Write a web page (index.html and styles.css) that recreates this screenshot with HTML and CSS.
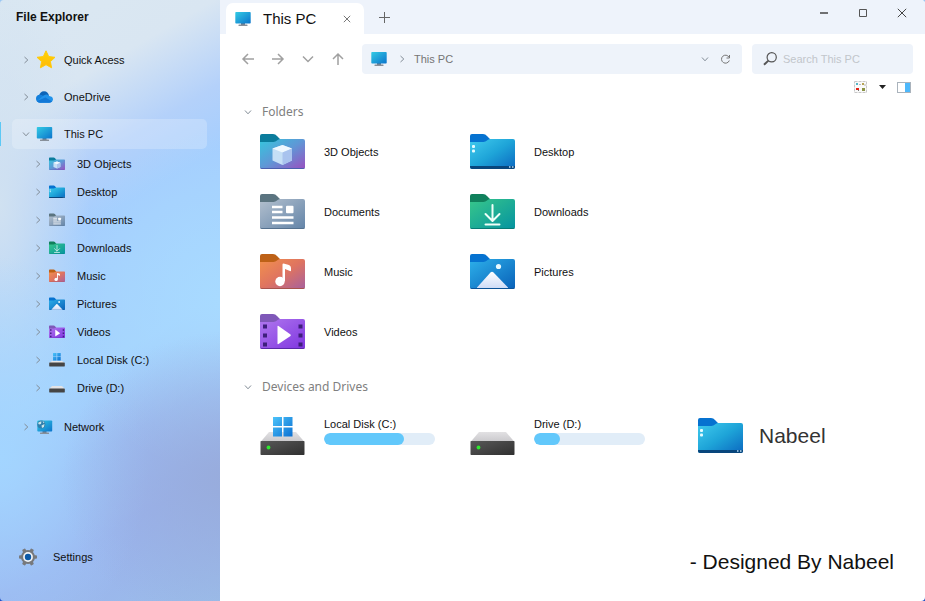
FILE: index.html
```html
<!DOCTYPE html>
<html lang="en">
<head>
<meta charset="utf-8">
<meta name="viewport" content="width=device-width, initial-scale=1">
<title>File Explorer</title>
<link rel="stylesheet" href="styles.css">
</head>
<body>
<svg class="sprite" aria-hidden="true" width="0" height="0">
  <defs>
    <linearGradient id="g3d" x1="0" y1="0" x2="1" y2="1"><stop offset="0" stop-color="#35c6dd"/><stop offset=".5" stop-color="#5f97d6"/><stop offset="1" stop-color="#9a4fc0"/></linearGradient>
    <linearGradient id="gdesk" x1="0" y1="0" x2="1" y2="1"><stop offset="0" stop-color="#41cbee"/><stop offset=".5" stop-color="#1ea4d8"/><stop offset="1" stop-color="#0b68c0"/></linearGradient>
    <linearGradient id="gdoc" x1="0" y1="0" x2="1" y2="1"><stop offset="0" stop-color="#b3c0ce"/><stop offset="1" stop-color="#6384a8"/></linearGradient>
    <linearGradient id="gdown" x1="0" y1="0" x2="1" y2="1"><stop offset="0" stop-color="#38c78a"/><stop offset="1" stop-color="#0593a0"/></linearGradient>
    <linearGradient id="gmus" x1="0" y1="0" x2="1" y2="1"><stop offset="0" stop-color="#f2914c"/><stop offset=".5" stop-color="#df7460"/><stop offset="1" stop-color="#a7609e"/></linearGradient>
    <linearGradient id="gpic" x1="0" y1="0" x2="1" y2="1"><stop offset="0" stop-color="#2db0ea"/><stop offset="1" stop-color="#0961b8"/></linearGradient>
    <linearGradient id="gvid" x1="0" y1="0" x2="1" y2="1"><stop offset="0" stop-color="#b078ee"/><stop offset="1" stop-color="#7f35e0"/></linearGradient>
    <linearGradient id="gmount" x1="0" y1="0" x2="0" y2="1"><stop offset="0" stop-color="#fff"/><stop offset="1" stop-color="#cfdcf6"/></linearGradient>
    <linearGradient id="gscreen" x1="0" y1="0" x2="1" y2="1"><stop offset="0" stop-color="#33cbe4"/><stop offset="1" stop-color="#0b74cc"/></linearGradient>
    <linearGradient id="gdrive" x1="0" y1="0" x2="1" y2="1"><stop offset="0" stop-color="#585858"/><stop offset="1" stop-color="#303030"/></linearGradient>
    <linearGradient id="glid" x1="0" y1="0" x2="0" y2="1"><stop offset="0" stop-color="#e2e1e3"/><stop offset="1" stop-color="#c9c8cb"/></linearGradient>
    <linearGradient id="gwin" x1="0" y1="0" x2="1" y2="1"><stop offset="0" stop-color="#4cc3fa"/><stop offset="1" stop-color="#0b70d2"/></linearGradient>
    <linearGradient id="gstar" x1="0" y1="0" x2="0" y2="1"><stop offset="0" stop-color="#ffd400"/><stop offset="1" stop-color="#ffb80c"/></linearGradient>
    <path id="ftab" d="M0 2Q0 0 2 0H13Q15.500 0 17 2L20 5V11H0Z"/>
    <path id="fbody" d="M0 8H13.500Q15.500 8 17 6.600L18 5.700Q19 5 20.500 5H43Q45 5 45 7V33Q45 35 43 35H2Q0 35 0 33Z"/>
    <path id="fedge" d="M0 32.500V33Q0 35 2 35H43Q45 35 45 33V32.500Q45 34 43 34H2Q0 34 0 32.500Z"/>
  </defs>
  <symbol id="i-3d" viewBox="0 0 45 36"><use href="#ftab" fill="#0b7c9c"/><use href="#fbody" fill="url(#g3d)"/><use href="#fedge" fill="#4a5fae"/><path d="M12.500 14.500 22.500 11 32 14.500V26.500L22.500 31 12.500 26.500Z" fill="#c5dff6"/><path d="M12.500 14.500 22.500 11 32 14.500 22.500 18.500Z" fill="#eff8ff"/><path d="M22.500 18.500 32 14.500V26.500L22.500 31Z" fill="#a9c3ee"/></symbol>
  <symbol id="i-desktop" viewBox="0 0 45 36"><use href="#ftab" fill="#0672d0"/><use href="#fbody" fill="url(#gdesk)"/><path d="M0 32H45V33Q45 35 43 35H2Q0 35 0 33Z" fill="#08467c"/><rect x="2" y="11" width="3" height="3" rx="1" fill="#e5fbff"/><rect x="2" y="15.500" width="3" height="3" rx="1" fill="#e5fbff"/><path d="M39 33h1.500M42 33h1.500" stroke="#b9dcf5" stroke-width="1.500"/></symbol>
  <symbol id="i-docs" viewBox="0 0 45 36"><use href="#ftab" fill="#5b7480"/><use href="#fbody" fill="url(#gdoc)"/><use href="#fedge" fill="#55718f"/><path d="M12 13h10.500M12 18h10.500M12 23.500h21.500M12 29h21.500" stroke="#fff" stroke-width="2.400"/><rect x="26" y="11.800" width="7.500" height="7.400" rx="1" fill="#fff"/></symbol>
  <symbol id="i-down" viewBox="0 0 45 36"><use href="#ftab" fill="#10805c"/><use href="#fbody" fill="url(#gdown)"/><use href="#fedge" fill="#087b75"/><path d="M22.500 11V26M15.500 20l7 7 7-7M15.500 30.500h14" fill="none" stroke="#effff8" stroke-width="2" stroke-linecap="round" stroke-linejoin="round"/></symbol>
  <symbol id="i-music" viewBox="0 0 45 36"><use href="#ftab" fill="#bd6117"/><use href="#fbody" fill="url(#gmus)"/><use href="#fedge" fill="#a8534c"/><path d="M22.500 10.500Q22.500 9.500 23.500 9.500L29 11Q31 12 31 14V16.500Q31 17.500 30 17L25 15V27H22.500Z" fill="#fff"/><circle cx="20" cy="27.500" r="4.700" fill="#fff"/></symbol>
  <symbol id="i-pics" viewBox="0 0 45 36"><use href="#ftab" fill="#0672d0"/><use href="#fbody" fill="url(#gpic)"/><use href="#fedge" fill="#0a5297"/><path d="M7 33.500 20.500 18.500Q22 17 23.500 18.500L38 33.500V34H7Z" fill="url(#gmount)"/><circle cx="28.500" cy="12.500" r="2.600" fill="#e8faff"/></symbol>
  <symbol id="i-video" viewBox="0 0 45 36"><use href="#ftab" fill="#7f58b8"/><use href="#fbody" fill="url(#gvid)"/><use href="#fedge" fill="#5a28a8"/><path d="M3 10.500h4v4H3zM3 19.500h4v4H3zM3 28.500h4v4H3zM38.500 10.500h4v4h-4zM38.500 19.500h4v4h-4zM38.500 28.500h4v4h-4z" fill="#3e1f7c"/><path d="M17.500 12.500Q17.500 11.500 18.500 12L30.500 20.500Q31 21.200 30.500 22L18.500 30Q17.500 30.500 17.500 29.500Z" fill="#fff"/></symbol>
  <symbol id="i-local" viewBox="0 0 45 38"><path d="M9 15H36L44.500 25H.5Z" fill="url(#glid)"/><path d="M13 0h9v9h-9zM23.500 0h9v9h-9zM13 10.500h9v9h-9zM23.500 10.500h9v9h-9z" fill="url(#gwin)"/><rect x=".5" y="24" width="44" height="14" rx=".8" fill="url(#gdrive)"/><circle cx="8.500" cy="30.500" r="1.900" fill="#2ee82e"/></symbol>
  <symbol id="i-drive" viewBox="0 0 45 38"><path d="M9 15H36L44.500 25H.5Z" fill="url(#glid)"/><rect x=".5" y="24" width="44" height="14" rx=".8" fill="url(#gdrive)"/><circle cx="8.500" cy="30.500" r="1.900" fill="#2ee82e"/></symbol>
  <symbol id="i-minilocal" viewBox="0 0 16 14"><path d="M4 0h3.500v3.500H4zM8.200 0h3.500v3.500H8.200zM4 4.100h3.500v3.400H4zM8.200 4.100h3.500v3.400H8.200z" fill="url(#gwin)"/><path d="M3 8H13L15.800 10H.2Z" fill="#e8e8e8"/><rect x=".2" y="9.500" width="15.600" height="4" rx=".4" fill="#454545"/></symbol>
  <symbol id="i-minidrive" viewBox="0 0 16 14"><path d="M3 5H13L15.800 8H.2Z" fill="#e3e3e5"/><rect x=".2" y="7.500" width="15.600" height="4" rx=".4" fill="#454545"/></symbol>
  <symbol id="i-pc" viewBox="0 0 16 14"><path d="M6 11h4v2H6z" fill="#5d7690"/><rect x="3.500" y="12.500" width="9" height="1.500" rx=".5" fill="#87909a"/><rect x=".3" y="0" width="15.400" height="11.500" rx=".8" fill="url(#gscreen)"/></symbol>
  <symbol id="i-net" viewBox="0 0 16 14"><path d="M6 11h4v2H6z" fill="#5d7690"/><rect x="3.500" y="12.500" width="9" height="1.500" rx=".5" fill="#87909a"/><rect x=".8" y=".5" width="14.900" height="11" rx=".8" fill="url(#gscreen)"/><circle cx="4.800" cy="4.500" r="4" fill="#2e7fae"/><path d="M1.500 3Q3 1 5 1.500L4.500 4 2.500 4.500ZM5 5.500 8 4 7.500 7 5.500 8ZM6 1l2 1.300-1 1Z" fill="#c8e5e9"/></symbol>
  <symbol id="i-star" viewBox="0 0 20 19"><path d="M10 .8 12.700 6.600 19 7.300 14.400 11.600 15.600 17.800 10 14.700 4.400 17.800 5.600 11.600 1 7.300 7.300 6.600Z" fill="url(#gstar)" stroke="#ffca08" stroke-linejoin="round"/></symbol>
  <symbol id="i-cloud" viewBox="0 0 18 12"><circle cx="8.500" cy="5.200" r="5.200" fill="#0c64b8"/><circle cx="4.200" cy="7.700" r="4.200" fill="#1480dc"/><path d="M8 4.500Q12 2 14 5 18 5.500 18 8.700 17.500 12 14 12H4.500Q2 12 1 10.300Z" fill="#2092ea"/><path d="M1 10.300 10 6.500 17.200 10.800Q16 12 14 12H4.500Q2 12 1 10.300Z" fill="#1278d6"/></symbol>
  <symbol id="i-gear" viewBox="0 0 18 18"><g fill="#77797c"><circle cx="9" cy="9" r="7"/><rect x="7.200" y="0" width="3.600" height="18" rx="1" transform="rotate(30 9 9)"/><rect x="7.200" y="0" width="3.600" height="18" rx="1" transform="rotate(90 9 9)"/><rect x="7.200" y="0" width="3.600" height="18" rx="1" transform="rotate(150 9 9)"/></g><circle cx="9" cy="9" r="4.900" fill="#f0f3f7"/><circle cx="9" cy="9" r="3.200" fill="#0c5aa8"/></symbol>
  <symbol id="i-right" viewBox="0 0 8 8"><path d="M2.500 1 5.800 4 2.500 7" fill="none" stroke="currentColor"/></symbol>
  <symbol id="i-chev" viewBox="0 0 8 8"><path d="M1 2.500 4 5.800 7 2.500" fill="none" stroke="currentColor"/></symbol>
</svg>

<div class="window">
  <aside class="sidebar">
    <h1 class="app-title">File Explorer</h1>
    <nav aria-label="Locations">
      <ul class="tree">
        <li><a class="node" href="#"><svg class="chev"><use href="#i-right"/></svg><svg class="star"><use href="#i-star"/></svg>Quick Acess</a></li>
        <li><a class="node" href="#"><svg class="chev"><use href="#i-right"/></svg><svg class="glyph"><use href="#i-cloud"/></svg>OneDrive</a></li>
        <li>
          <a class="node active" href="#" aria-current="page"><svg class="chev"><use href="#i-chev"/></svg><svg class="glyph"><use href="#i-pc"/></svg>This PC</a>
          <ul class="subtree">
            <li><a class="node" href="#"><svg class="chev"><use href="#i-right"/></svg><svg class="mini"><use href="#i-3d"/></svg>3D Objects</a></li>
            <li><a class="node" href="#"><svg class="chev"><use href="#i-right"/></svg><svg class="mini"><use href="#i-desktop"/></svg>Desktop</a></li>
            <li><a class="node" href="#"><svg class="chev"><use href="#i-right"/></svg><svg class="mini"><use href="#i-docs"/></svg>Documents</a></li>
            <li><a class="node" href="#"><svg class="chev"><use href="#i-right"/></svg><svg class="mini"><use href="#i-down"/></svg>Downloads</a></li>
            <li><a class="node" href="#"><svg class="chev"><use href="#i-right"/></svg><svg class="mini"><use href="#i-music"/></svg>Music</a></li>
            <li><a class="node" href="#"><svg class="chev"><use href="#i-right"/></svg><svg class="mini"><use href="#i-pics"/></svg>Pictures</a></li>
            <li><a class="node" href="#"><svg class="chev"><use href="#i-right"/></svg><svg class="mini"><use href="#i-video"/></svg>Videos</a></li>
            <li><a class="node" href="#"><svg class="chev"><use href="#i-right"/></svg><svg class="mini"><use href="#i-minilocal"/></svg>Local Disk (C:)</a></li>
            <li><a class="node" href="#"><svg class="chev"><use href="#i-right"/></svg><svg class="mini"><use href="#i-minidrive"/></svg>Drive (D:)</a></li>
          </ul>
        </li>
        <li><a class="node" href="#"><svg class="chev"><use href="#i-right"/></svg><svg class="glyph"><use href="#i-net"/></svg>Network</a></li>
      </ul>
    </nav>
    <a class="settings" href="#"><svg class="gear"><use href="#i-gear"/></svg>Settings</a>
  </aside>

  <main class="main">
    <header class="titlebar">
      <div class="tab">
        <svg class="pc"><use href="#i-pc"/></svg>
        <span class="tab-title">This PC</span>
        <button class="icon-btn" type="button" aria-label="Close tab"><svg width="8" height="8" viewBox="0 0 8 8"><path d="M.8.8 7.200 7.200M7.200.8.8 7.200" stroke="#777"/></svg></button>
      </div>
      <button class="icon-btn add" type="button" aria-label="New tab"><svg width="12" height="12" viewBox="0 0 12 12"><path d="M5.500 0V11M0 5.500H11" stroke="#666"/></svg></button>
      <div class="controls">
        <button class="icon-btn" type="button" aria-label="Minimize"><svg width="10" height="10" viewBox="0 0 10 10"><path d="M1 5H9" stroke="#444" stroke-width="1.500"/></svg></button>
        <button class="icon-btn" type="button" aria-label="Maximize"><svg width="10" height="10" viewBox="0 0 10 10"><path d="M1.500 1.500H8.500V8.500H1.500Z" fill="none" stroke="#555"/></svg></button>
        <button class="icon-btn" type="button" aria-label="Close"><svg width="10" height="10" viewBox="0 0 10 10"><path d="M.8.8 9.200 9.200M9.200.8.8 9.200" stroke="#444"/></svg></button>
      </div>
    </header>

    <div class="toolbar">
      <div class="history">
        <button class="icon-btn" type="button" aria-label="Back"><svg width="14" height="14" viewBox="0 0 14 14"><path d="M13 7H2M7 2 2 7l5 5"/></svg></button>
        <button class="icon-btn" type="button" aria-label="Forward"><svg width="14" height="14" viewBox="0 0 14 14"><path d="M1 7H12M7 2l5 5-5 5"/></svg></button>
        <button class="icon-btn" type="button" aria-label="Recent"><svg width="14" height="14" viewBox="0 0 14 14"><path d="M2 4.500l5 5 5-5"/></svg></button>
        <button class="icon-btn" type="button" aria-label="Up"><svg width="14" height="14" viewBox="0 0 14 14"><path d="M7 13V2M2 7l5-5 5 5"/></svg></button>
      </div>
      <div class="address">
        <svg class="pc"><use href="#i-pc"/></svg>
        <svg class="chev"><use href="#i-right"/></svg>
        <span class="crumb">This PC</span>
        <button class="icon-btn" type="button" aria-label="Show locations"><svg class="chev"><use href="#i-chev"/></svg></button>
        <button class="icon-btn" type="button" aria-label="Refresh"><svg width="11" height="11" viewBox="0 0 11 11"><path d="M9 3.200A4 4 0 1 0 9.300 6.500M9.500 1V4H6.500" fill="none" stroke="#777"/></svg></button>
      </div>
      <div class="search">
        <label for="q" aria-label="Search This PC"><svg width="14" height="14" viewBox="0 0 14 14"><circle cx="8.700" cy="5.300" r="4.600" fill="none" stroke="#555" stroke-width="1.200"/><path d="M5.400 8.600 1 12.800" stroke="#555" stroke-width="2"/></svg></label>
        <input id="q" type="search" placeholder="Search This PC">
      </div>
    </div>

    <div class="views">
      <button class="icon-btn" type="button" aria-label="View"><svg width="13" height="12" viewBox="0 0 13 12"><rect x=".5" y=".5" width="12" height="11" fill="#fafafa" stroke="#c8c8c8" stroke-dasharray="3 1"/><rect x="2" y="2" width="2" height="2" fill="#55b5c8"/><rect x="8" y="2" width="2" height="2" fill="#b6a456"/><rect x="2" y="7" width="3" height="2" fill="#e02418"/><rect x="8" y="7" width="3" height="3" fill="#8b9446"/><path d="M5.500 3.500h1M10.500 4h1M4 9.500h1" stroke="#777"/></svg></button>
      <button class="icon-btn" type="button" aria-label="View options"><svg width="7" height="4" viewBox="0 0 7 4"><path d="M0 0H7L3.500 4Z" fill="#222"/></svg></button>
      <button class="icon-btn" type="button" aria-label="Preview pane"><svg width="14" height="11" viewBox="0 0 14 11"><rect x=".5" y=".5" width="13" height="10" fill="#fff" stroke="#aab3bc"/><rect x="8" y="1" width="5" height="9" fill="#4db8fb"/></svg></button>
    </div>

    <section class="group">
      <h2 class="group-title"><svg class="chev"><use href="#i-chev"/></svg>Folders</h2>
      <div class="grid">
        <a class="tile" href="#"><svg class="folder"><use href="#i-3d"/></svg>3D Objects</a>
        <a class="tile" href="#"><svg class="folder"><use href="#i-desktop"/></svg>Desktop</a>
        <a class="tile first" href="#"><svg class="folder"><use href="#i-docs"/></svg>Documents</a>
        <a class="tile" href="#"><svg class="folder"><use href="#i-down"/></svg>Downloads</a>
        <a class="tile first" href="#"><svg class="folder"><use href="#i-music"/></svg>Music</a>
        <a class="tile" href="#"><svg class="folder"><use href="#i-pics"/></svg>Pictures</a>
        <a class="tile first" href="#"><svg class="folder"><use href="#i-video"/></svg>Videos</a>
      </div>
    </section>

    <section class="group devices">
      <h2 class="group-title"><svg class="chev"><use href="#i-chev"/></svg>Devices and Drives</h2>
      <div class="grid">
        <a class="tile" href="#"><svg class="disk"><use href="#i-local"/></svg><span class="usage">Local Disk (C:)<span class="meter"><span class="fill" style="width:72%"></span></span></span></a>
        <a class="tile" href="#"><svg class="disk"><use href="#i-drive"/></svg><span class="usage">Drive (D:)<span class="meter"><span class="fill" style="width:23%"></span></span></span></a>
        <a class="tile owner" href="#"><svg class="folder"><use href="#i-desktop"/></svg>Nabeel</a>
      </div>
    </section>

    <footer class="credit">- Designed By Nabeel</footer>
  </main>
</div>
</body>
</html>
```
FILE: styles.css
```css
* {
  box-sizing: border-box;
}

body {
  margin: 0;
  background: linear-gradient(#9cc8f4, #1e4fc4);
  color: #111;
  font: 11px/16px "Liberation Sans", Arial, sans-serif;
}

a {
  color: inherit;
  text-decoration: none;
}

ul {
  margin: 0;
  padding: 0;
  list-style: none;
}

h1,
h2 {
  margin: 0;
}

svg {
  flex: none;
  display: block;
}

.sprite {
  position: absolute;
}

.window {
  display: flex;
  min-height: 100vh;
  overflow: hidden;
  border-radius: 4px;
}

/* Sidebar */

.sidebar {
  display: flex;
  flex: none;
  flex-direction: column;
  width: 220px;
  padding: 9px 0 35px;
  background:
    radial-gradient(ellipse 170px 150px at 105% 80%, #98acdc 0, #98acdc00 100%),
    radial-gradient(ellipse 150px 200px at 0 76%, #a3d5ff 0, #a3d5ff00 100%),
    radial-gradient(ellipse 160px 170px at 100% 50%, #a8daff 0, #a8daff00 100%),
    radial-gradient(ellipse 90px 250px at 0 34%, #d0e1f1 0, #d0e1f100 100%),
    linear-gradient(150deg, #dbe8f2 0, #d9e6f2 17%, #b4d1fa 29%, #a5cefe 38%, #a5d3fe 58%, #9dbdf5 70%, #9ab3ee 82%, #9bbde9 100%);
}

.app-title {
  padding-left: 16px;
  font-size: 12px;
  line-height: 16px;
}

.tree {
  display: flex;
  flex-direction: column;
  gap: 7px;
  padding: 20px 13px 0 12px;
}

.node {
  display: flex;
  align-items: center;
  height: 30px;
  padding-left: 10px;
  border-radius: 5px;
}

.chev {
  width: 8px;
  height: 8px;
  color: #828c96;
}

.glyph {
  width: 17px;
  height: 14px;
  margin: 0 11px 0 6px;
}

.star {
  width: 20px;
  height: 19px;
  margin: 0 8px 2px 6px;
}

.active {
  position: relative;
  background: #ffffff38;
}

.active::before {
  position: absolute;
  top: 3px;
  left: -12px;
  width: 1px;
  height: 24px;
  background: #5cc8f5;
  content: "";
}

.subtree {
  margin: 1px 0 3px;
}

.subtree .node {
  height: 28px;
  padding-left: 22px;
}

.mini {
  width: 16px;
  height: 14px;
  margin: 0 12px 0 7px;
}

.settings {
  display: flex;
  align-items: center;
  gap: 16px;
  margin-top: auto;
  padding-left: 19px;
}

.gear {
  width: 18px;
  height: 18px;
}

/* Title bar */

.main {
  display: flex;
  flex: 1;
  flex-direction: column;
  min-width: 0;
  background: #fff;
}

.icon-btn {
  display: grid;
  flex: none;
  place-items: center;
  width: 20px;
  height: 20px;
  padding: 0;
  border: 0;
  background: none;
}

.titlebar {
  display: flex;
  align-items: flex-start;
  height: 34px;
  padding: 3px 13px 0 6px;
  background: #eef3fb;
}

.tab {
  display: flex;
  align-items: center;
  width: 138px;
  height: 31px;
  padding: 0 7px 0 9px;
  border-radius: 7px 7px 0 0;
  background: #fff;
}

.pc {
  width: 16px;
  height: 14px;
}

.tab-title {
  flex: 1;
  padding-left: 12px;
  font-size: 15px;
  line-height: 20px;
}

.add {
  margin: 5px 0 0 11px;
}

.controls {
  display: flex;
  gap: 19px;
  margin-left: auto;
}

/* Toolbar */

.toolbar {
  display: flex;
  align-items: center;
  padding: 10px 12px 0 18px;
}

.history {
  display: flex;
  gap: 10px;
  margin-right: 14px;
}

.history path {
  fill: none;
  stroke: #a0a0a0;
  stroke-width: 1.500;
}

.address,
.search {
  display: flex;
  align-items: center;
  height: 30px;
  border-radius: 4px;
  background: #eef3fa;
}

.address {
  flex: 1;
  min-width: 0;
  padding: 0 7px 0 9px;
  color: #757575;
}

.address > .chev {
  margin: 0 8px 0 11px;
}

.crumb {
  flex: 1;
}

.search {
  gap: 6px;
  width: 161px;
  margin-left: 10px;
  padding: 0 10px 0 11px;
}

.search input {
  flex: 1;
  min-width: 0;
  padding: 0;
  border: 0;
  outline: 0;
  background: none;
  color: #555;
  font: inherit;
}

.search input::placeholder {
  color: #c2c6cb;
}

.views {
  display: flex;
  gap: 2px;
  justify-content: flex-end;
  padding: 3px 11px 0 0;
}

/* Content */

.group {
  padding-top: 7px;
}

.group-title {
  display: flex;
  align-items: center;
  gap: 10px;
  padding-left: 24px;
  color: #808080;
  font: 12px/16px "Noto Sans", "Open Sans", sans-serif;
}

.grid {
  display: grid;
  grid-template-columns: 210px 210px 1fr;
  grid-auto-rows: 60px;
  padding: 2px 0 0 40px;
}

.first {
  grid-column: 1;
}

.tile {
  display: flex;
  align-items: center;
  gap: 19px;
}

.folder {
  width: 45px;
  height: 36px;
}

.disk {
  width: 45px;
  height: 38px;
}

.devices {
  padding-top: 17px;
}

.devices .grid {
  padding-top: 11px;
}

.usage {
  flex: 1;
  max-width: 111px;
  padding-bottom: 12px;
}

.meter {
  display: block;
  height: 12px;
  margin-top: 1px;
  overflow: hidden;
  border-radius: 6px;
  background: #e1edf8;
}

.fill {
  display: block;
  height: 100%;
  border-radius: 6px;
  background: #62c8fb;
}

.owner {
  gap: 16px;
  padding-left: 18px;
  color: #333;
  font-size: 21px;
  line-height: 24px;
}

.credit {
  margin-top: auto;
  padding: 0 31px 27px 0;
  font-size: 21px;
  line-height: 24px;
  text-align: right;
}
```
